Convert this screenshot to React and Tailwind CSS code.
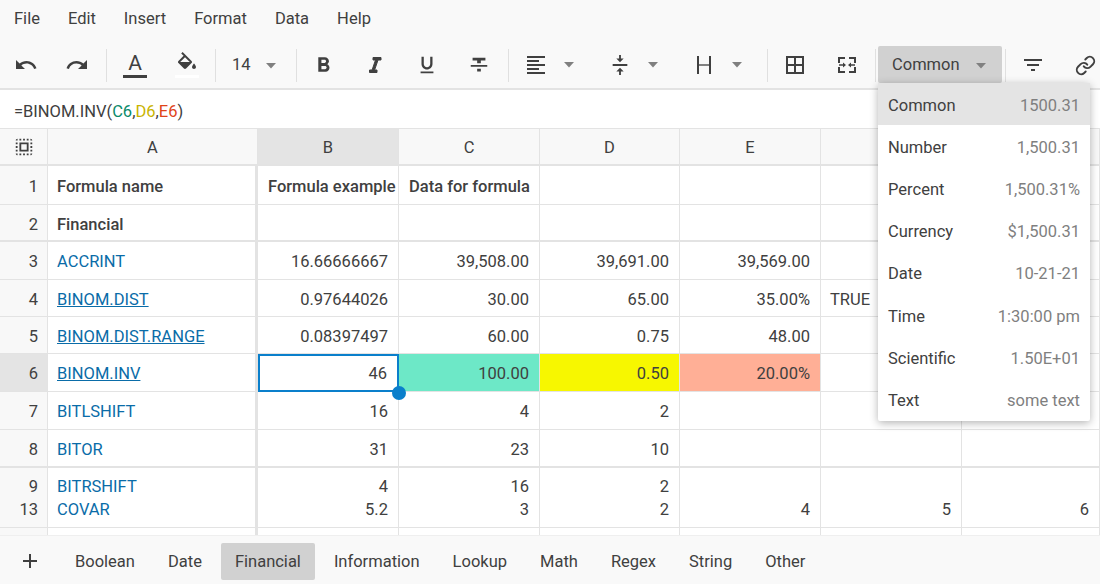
import React from "react";
import {
  MdUndo, MdRedo, MdFormatBold, MdFormatUnderlined,
  MdFormatStrikethrough, MdFormatAlignLeft, MdVerticalAlignCenter, MdBorderAll, MdFilterList, MdSelectAll, MdAdd,
} from "react-icons/md";
import { Link } from "lucide-react";

const Caret = () => (
  <svg width="10" height="6" viewBox="0 0 10 6" className="block"><path d="M0 0h10L5 5.5z" fill="#808080" /></svg>
);
const Sep = ({ cls }) => <div className={`w-px h-[33px] bg-[#e0e0e0] shrink-0 ${cls}`} />;
const Btn = ({ children, w = "w-[52px]" }) => (
  <div className={`${w} h-full flex items-center justify-center shrink-0`}>{children}</div>
);
const Drop = ({ children }) => (
  <div className="w-[84px] h-full flex items-center shrink-0">
    <div className="w-[52px] flex justify-center">{children}</div>
    <div className="w-[14px] flex justify-center"><Caret /></div>
  </div>
);
const FillIcon = () => (
  <svg width="24" height="18" viewBox="0 0 24 18" fill="#404040" className="block">
    <path d="M16.560 8.940L7.620 0 6.210 1.410l2.380 2.380-5.150 5.150c-.59.59-.59 1.540 0 2.120l5.500 5.500c.29.29.68.44 1.060.44s.77-.15 1.060-.44l5.500-5.500c.59-.58.59-1.530 0-2.120zM5.210 10L10 5.210 14.790 10H5.210zM19 11.500s-2 2.170-2 3.500c0 1.100.9 2 2 2s2-.9 2-2c0-1.330-2-3.500-2-3.500z" />
  </svg>
);
const ItalicIcon = () => (
  <svg width="24" height="24" viewBox="0 0 24 24" fill="#404040" stroke="#404040" strokeWidth="1">
    <path d="M10 4.500v2.500h2.500l-3.400 10H6.500v2.500h7.500v-2.500h-2.400l3.400-10H18V4.500z" />
  </svg>
);
const HIcon = () => (
  <svg width="14" height="20" viewBox="0 0 14 20" fill="none" stroke="#404040" strokeWidth="2">
    <path d="M1 1v18M13 1v18" /><path d="M1 10h12" strokeWidth="1.3" />
  </svg>
);
const MergeIcon = () => (
  <svg width="18" height="16" viewBox="0 0 18 16" fill="none" stroke="#404040" strokeWidth="2">
    <path d="M1 6V1h6M11 1h6v5M1 10v5h6M11 15h6v-5" />
    <path d="M1 8h6M17 8h-6" strokeWidth="1.4" />
    <path d="M5 5.500 8 8l-3 2.500zM13 5.500 10 8l3 2.500z" fill="#404040" stroke="none" />
  </svg>
);

const cols = ["A", "B", "C", "D", "E", "F", "G"];
const L = ({ t, u }) => (
  <span className={`text-[#0a6ca8] ${u ? "underline" : ""}`}>{t}</span>
);
const LOW = "pt-[5px]";
const MID = "pt-[3px]";
const rows = [
  { n: "1", h: "h-[39px]", p: LOW, c: [<span className="font-medium">Formula name</span>, <span className="font-medium">Formula example</span>, <span className="font-medium">Data for formula</span>, "", "", "", ""], left: [0, 1, 2] },
  { n: "2", h: "h-[37px]", p: LOW, c: [<span className="font-medium">Financial</span>, "", "", "", "", "", ""], thick: true, left: [0] },
  { n: "3", h: "h-[38px]", p: MID, c: [<L t="ACCRINT" />, "16.66666667", "39,508.00", "39,691.00", "39,569.00", "", ""], left: [0] },
  { n: "4", h: "h-[37px]", p: LOW, c: [<L t="BINOM.DIST" u />, "0.97644026", "30.00", "65.00", "35.00%", "TRUE", ""], left: [0, 5] },
  { n: "5", h: "h-[37px]", p: LOW, c: [<L t="BINOM.DIST.RANGE" u />, "0.08397497", "60.00", "0.75", "48.00", "", ""], left: [0] },
  { n: "6", h: "h-[38px]", p: MID, c: [<L t="BINOM.INV" u />, "46", "100.00", "0.50", "20.00%", "", ""], left: [0], active: true },
  { n: "7", h: "h-[38px]", p: MID, c: [<L t="BITLSHIFT" />, "16", "4", "2", "", "", ""], left: [0] },
  { n: "8", h: "h-[38px]", p: LOW, c: [<L t="BITOR" />, "31", "23", "10", "", "", ""], thick: true, left: [0] },
];
const bg = { 2: "bg-[#6de8c7]", 3: "bg-[#f7f700]", 4: "bg-[#ffaf96]" };
const colW = [
  "w-[210px] border-r-[3px]", "w-[141px]", "w-[141px]", "w-[140px]", "w-[141px]", "w-[141px]", "w-[138px]",
];
const headW = ["w-[210px]", "w-[141px]", "w-[141px]", "w-[140px]", "w-[141px]", "w-[141px]", "w-[138px]"];

const Index = ({ children, h, active, thick, p = "" }) => (
  <div className={`w-[48px] shrink-0 ${h} flex items-center justify-end pr-[9px] ${p} border-r border-[#e3e3e3] ${thick ? "border-b-2" : "border-b"} ${active ? "bg-[#e4e4e4]" : "bg-[#f8f8f8]"}`}>
    {children}
  </div>
);

const formats = [
  ["Common", "1500.31"], ["Number", "1,500.31"], ["Percent", "1,500.31%"], ["Currency", "$1,500.31"],
  ["Date", "10-21-21"], ["Time", "1:30:00 pm"], ["Scientific", "1.50E+01"], ["Text", "some text"],
];
const tabs = ["Boolean", "Date", "Financial", "Information", "Lookup", "Math", "Regex", "String", "Other"];
const menu = ["File", "Edit", "Insert", "Format", "Data", "Help"];

export default function App() {
  return (
    <div className="relative w-[1100px] h-[584px] overflow-hidden flex flex-col bg-white text-[#404040] text-[16.5px] [font-family:Roboto,sans-serif]">
      {/* menu */}
      <div className="h-[38px] bg-[#f9f9f9] flex items-center gap-[28px] pl-[14px] pt-[1px] shrink-0">
        {menu.map((m) => <span key={m}>{m}</span>)}
      </div>
      {/* toolbar */}
      <div className="h-[52px] bg-[#f9f9f9] border-b-2 border-[#e3e3e3] flex items-center shrink-0 overflow-hidden pt-[4px] text-[#404040]">
        <Btn w="w-[51px]"><MdUndo size={24} /></Btn>
        <Btn><MdRedo size={24} /></Btn>
        <Sep cls="ml-[3px] mr-[2px]" />
        <Btn>
          <div className="flex flex-col items-center w-[24px]">
            <span className="text-[21px] leading-[22px]">A</span>
            <div className="w-[24px] h-[3px] bg-[#404040] mt-[1px]" />
          </div>
        </Btn>
        <Btn>
          <div className="flex flex-col items-center w-[24px]">
            <FillIcon />
            <div className="w-[24px] h-[3px] bg-white mt-[5px]" />
          </div>
        </Btn>
        <Sep cls="ml-[2px]" />
        <div className="w-[80px] h-full flex items-center shrink-0 pl-[16px] pt-[1px]">
          <span className="w-[34px]">14</span><Caret />
        </div>
        <Sep />
        <Btn><MdFormatBold size={25} /></Btn>
        <Btn><ItalicIcon /></Btn>
        <Btn><MdFormatUnderlined size={22} /></Btn>
        <Btn><MdFormatStrikethrough size={22} /></Btn>
        <Sep cls="ml-[3px] mr-[1px]" />
        <Drop><MdFormatAlignLeft size={24} /></Drop>
        <Drop><MdVerticalAlignCenter size={22} /></Drop>
        <Drop><HIcon /></Drop>
        <Sep cls="ml-[5px] mr-[1px]" />
        <Btn><MdBorderAll size={24} /></Btn>
        <Btn><MergeIcon /></Btn>
        <Sep cls="ml-[2px] mr-[2px]" />
        <div className="w-[124px] h-[37px] -mt-[2px] rounded-[2px] bg-[#d1d1d1] flex items-center pl-[14px] pt-[3px] shrink-0">
          <span className="w-[84px]">Common</span><Caret />
        </div>
        <Sep cls="ml-[3px] mr-px" />
        <Btn><MdFilterList size={24} /></Btn>
        <Btn><Link size={21} strokeWidth={2.2} /></Btn>
      </div>
      {/* formula bar */}
      <div className="h-[38px] flex items-center pl-[14px] pt-[7px] shrink-0 bg-white">
        =BINOM.INV(<span className="text-[#0a8a6a]">C6</span>,<span className="text-[#c9b400]">D6</span>,<span className="text-[#e0441a]">E6</span>)
      </div>
      {/* sheet */}
      <div className="flex-1 overflow-hidden border-t border-[#e3e3e3]">
        <div className="flex h-[37px] border-b-2 border-[#e3e3e3] bg-[#f8f8f8]">
          <div className="w-[48px] flex items-center justify-center border-r border-[#e3e3e3] shrink-0"><MdSelectAll size={22} /></div>
          {cols.map((c, i) => (
            <div key={c} className={`${headW[i]} shrink-0 flex items-center justify-center pt-[3px] border-r border-[#e3e3e3] ${c === "B" ? "bg-[#e4e4e4]" : ""}`}>
              {i < 5 ? c : ""}
            </div>
          ))}
        </div>
        {rows.map((r) => (
          <div key={r.n} className="flex">
            <Index h={r.h} active={r.active} thick={r.thick} p={r.p}>{r.n}</Index>
            {r.c.map((v, i) => {
              const sel = r.active && i === 1;
              const isLeft = r.left.includes(i);
              const alignCls = isLeft ? `justify-start ${i === 1 || i === 2 ? "pl-[10px]" : "pl-[9px]"}` : "justify-end pr-[10px]";
              const borderCls = sel
                ? "border-2 border-[#0a7fcb]"
                : `border-[#e3e3e3] ${i === 0 ? "" : "border-r"} ${r.thick ? "border-b-2" : "border-b"}`;
              return (
                <div
                  key={i}
                  className={`${colW[i]} ${r.h} shrink-0 relative flex items-center ${r.p} whitespace-nowrap overflow-visible ${alignCls} ${borderCls} ${r.active && bg[i] ? bg[i] : ""}`}
                >
                  {v}
                  {sel && <div className="absolute -right-[9px] -bottom-[10px] w-[14px] h-[14px] rounded-full bg-[#0a7fcb] z-10" />}
                </div>
              );
            })}
          </div>
        ))}
        <div className="flex">
          <Index h="h-[60px]">
            <div className="flex flex-col items-end leading-[23px]"><span>9</span><span>13</span></div>
          </Index>
          {[
            [<L t="BITRSHIFT" />, <L t="COVAR" />], ["4", "5.2"], ["16", "3"], ["2", "2"], ["\u00a0", "4"], ["\u00a0", "5"], ["\u00a0", "6"],
          ].map((p, i) => (
            <div key={i} className={`${colW[i]} h-[60px] shrink-0 flex flex-col justify-center leading-[23px] border-b border-[#e3e3e3] ${i === 0 ? "items-start pl-[9px]" : "items-end pr-[10px] border-r"}`}>
              <span>{p[0]}</span><span>{p[1]}</span>
            </div>
          ))}
        </div>
        <div className="flex h-[8px]">
          <div className="w-[48px] shrink-0 bg-[#f8f8f8] border-r border-[#e3e3e3]" />
          {colW.map((c, i) => <div key={i} className={`${c} shrink-0 border-[#e3e3e3] ${i === 0 ? "" : "border-r"}`} />)}
        </div>
      </div>
      {/* tabs */}
      <div className="h-[49px] bg-[#f9f9f9] flex items-center gap-[5px] shrink-0 border-t border-[#efefef] pt-[2px]">
        <div className="w-[56px] flex justify-center shrink-0 pl-[4px]"><MdAdd size={24} /></div>
        {tabs.map((t) => (
          <div key={t} className={`h-[37px] px-[14px] pt-[3px] flex items-center rounded-[2px] ${t === "Financial" ? "bg-[#d1d1d1]" : ""}`}>{t}</div>
        ))}
      </div>
      {/* format dropdown */}
      <div className="absolute left-[878px] top-[83px] w-[212px] bg-white rounded-[2px] shadow-[0_2px_8px_rgba(0,0,0,0.3)] z-20">
        {formats.map(([a, b], i) => (
          <div key={a} className={`h-[42.2px] px-[10px] pt-[4px] flex items-center justify-between ${i === 0 ? "bg-[#e4e4e4]" : ""}`}>
            <span>{a}</span><span className="text-[#7f7f7f]">{b}</span>
          </div>
        ))}
      </div>
    </div>
  );
}
